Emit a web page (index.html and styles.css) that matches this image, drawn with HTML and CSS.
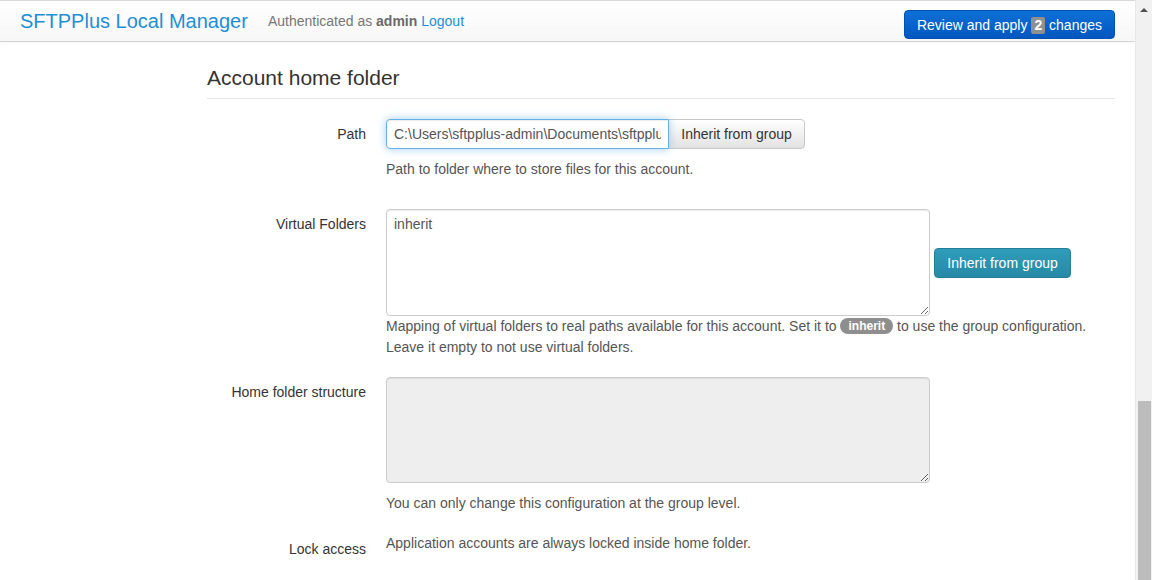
FILE: index.html
```html
<!DOCTYPE html>
<html lang="en">
<head>
<meta charset="utf-8">
<title>SFTPPlus Local Manager</title>
<link rel="stylesheet" href="styles.css">
</head>
<body class="page">
  <div class="viewport">
    <header class="navbar">
      <a class="brand" href="#">SFTPPlus Local Manager</a>
      <span class="auth">Authenticated as <b class="user">admin</b> <a class="logout" href="#">Logout</a></span>
      <button class="btn btn-primary review" type="button">Review and apply <span class="count">2</span> changes</button>
    </header>
    <main class="content">
      <section class="section">
        <h2 class="legend">Account home folder</h2>

        <div class="form-row row-path">
          <label class="control-label">Path</label>
          <div class="field">
            <div class="input-group">
              <input class="form-control path-input is-focus" type="text" value="C:\Users\sftpplus-admin\Documents\sftpplus\home">
              <button class="btn btn-default group-btn" type="button">Inherit from group</button>
            </div>
            <p class="help help-gap">Path to folder where to store files for this account.</p>
          </div>
        </div>

        <div class="form-row row-virtual">
          <label class="control-label">Virtual Folders</label>
          <div class="field">
            <div class="area-line">
              <textarea class="form-control area">inherit</textarea>
              <button class="btn btn-info" type="button">Inherit from group</button>
            </div>
            <p class="help help-tight">Mapping of virtual folders to real paths available for this account. Set it to <span class="pill">inherit</span> to use the group configuration.<br>Leave it empty to not use virtual folders.</p>
          </div>
        </div>

        <div class="form-row row-home">
          <label class="control-label">Home folder structure</label>
          <div class="field">
            <textarea class="form-control area area-disabled" disabled></textarea>
            <p class="help help-gap">You can only change this configuration at the group level.</p>
          </div>
        </div>

        <div class="form-row row-lock">
          <label class="control-label label-static">Lock access</label>
          <div class="field">
            <p class="help static">Application accounts are always locked inside home folder.</p>
          </div>
        </div>
      </section>
    </main>
  </div>
  <div class="scrollbar" aria-hidden="true">
    <span class="scroll-arrow"></span>
    <span class="scroll-thumb"></span>
  </div>
</body>
</html>
```

FILE: styles.css
```css
* { box-sizing: border-box; }

html, body { margin: 0; padding: 0; }

.page {
  display: flex;
  width: 1152px;
  height: 580px;
  overflow: hidden;
  background: #fff;
  font-family: "Liberation Sans", Arial, sans-serif;
  font-size: 14px;
  line-height: 20px;
  color: #333;
}

.viewport {
  flex: 1;
  min-width: 0;
  display: flex;
  flex-direction: column;
}

/* ---------- navbar ---------- */
.navbar {
  height: 42px;
  display: flex;
  align-items: center;
  padding: 0 20px;
  border-top: 1px solid #d8d8d8;
  border-bottom: 1px solid #d4d4d4;
  background: linear-gradient(to bottom, #ffffff 0%, #f7f7f7 100%);
  box-shadow: 0 1px 3px rgba(0,0,0,0.04);
}

.brand {
  font-size: 20px;
  line-height: 20px;
  color: #1d8fd6;
  text-decoration: none;
  margin-right: 20px;
}

.auth {
  color: #777;
  font-size: 14px;
}

.user { color: #6a6a6a; font-weight: bold; }

.logout { color: #1d8fd6; text-decoration: none; }

.review { margin-left: auto; align-self: flex-start; margin-top: 9px; }

/* ---------- buttons ---------- */
.btn {
  font-family: inherit;
  font-size: 14px;
  line-height: 20px;
  height: 30px;
  padding: 0 13px;
  border: 1px solid transparent;
  border-radius: 4px;
  cursor: pointer;
  white-space: nowrap;
}

.btn-primary {
  height: 29px;
  padding: 0 12px;
  color: #fff;
  background: linear-gradient(to bottom, #0c71d8 0%, #0356bf 100%);
  border-color: #0250b3;
}

.count {
  display: inline-block;
  background: #909090;
  color: #fff;
  font-weight: bold;
  border-radius: 2px;
  padding: 0 3px;
  line-height: 17px;
}

.btn-default {
  color: #333;
  background: linear-gradient(to bottom, #ffffff 0%, #e2e2e2 100%);
  border-color: #c8c8c8;
}

.btn-info {
  color: #fff;
  background: linear-gradient(to bottom, #2f9dba 0%, #2789a5 100%);
  border-color: #237e98;
  width: 137px;
  padding: 0;
}

/* ---------- content ---------- */
.content {
  flex: 1;
  padding: 21px 20px 0 207px;
}

.legend {
  margin: 0 0 20px;
  padding: 0 0 5px;
  font-size: 21px;
  line-height: 30px;
  font-weight: normal;
  color: #333;
  border-bottom: 1px solid #e5e5e5;
}

.form-row {
  display: grid;
  grid-template-columns: 159px 1fr;
  column-gap: 20px;
}

.row-path { margin-bottom: 30px; }
.row-virtual { margin-bottom: 19px; }
.row-home { margin-bottom: 20px; }

.control-label {
  text-align: right;
  padding-top: 5px;
  color: #333;
}

.label-static { padding-top: 6px; }

.field { min-width: 0; }

.form-control {
  font-family: inherit;
  font-size: 14px;
  line-height: 20px;
  color: #555;
  background: #fff;
  border: 1px solid #ccc;
  border-radius: 4px;
  padding: 4px 7px;
  box-shadow: inset 0 1px 1px rgba(0,0,0,0.075);
  outline: none;
}

.input-group { display: flex; }

.path-input {
  width: 283px;
  height: 30px;
  border-radius: 4px 0 0 4px;
  position: relative;
  z-index: 1;
}

.is-focus {
  border-color: #66afe9;
  box-shadow: inset 0 1px 1px rgba(0,0,0,0.075), 0 0 8px rgba(102,175,233,0.6);
}

.group-btn {
  width: 137px;
  padding: 0;
  margin-left: -1px;
  border-radius: 0 4px 4px 0;
}

.area-line {
  display: flex;
  align-items: center;
  gap: 4px;
}

.area {
  display: block;
  width: 544px;
  height: 107px;
  resize: vertical;
}

.area-disabled {
  height: 106px;
  background: #eee;
  cursor: not-allowed;
}

.help {
  margin: 0;
  color: #555;
}

.help-gap { margin-top: 10px; }

.help-tight { line-height: 21px; }

.static { margin: 0; }

.pill {
  display: inline-block;
  background: #8e8e8e;
  color: #fff;
  font-size: 12px;
  font-weight: bold;
  line-height: 16px;
  padding: 0 8px;
  border-radius: 8px;
  vertical-align: 1px;
}

/* ---------- fake scrollbar ---------- */
.scrollbar {
  width: 17px;
  flex: none;
  display: flex;
  flex-direction: column;
  align-items: center;
  background: #f1f1f1;
  border-left: 1px solid #e8e8e8;
}

.scroll-arrow {
  margin-top: 8px;
  width: 0;
  height: 0;
  border-left: 4px solid transparent;
  border-right: 4px solid transparent;
  border-bottom: 4px solid #505050;
}

.scroll-thumb {
  margin-top: auto;
  width: 13px;
  height: 179px;
  background: #bcbcbc;
}
```
